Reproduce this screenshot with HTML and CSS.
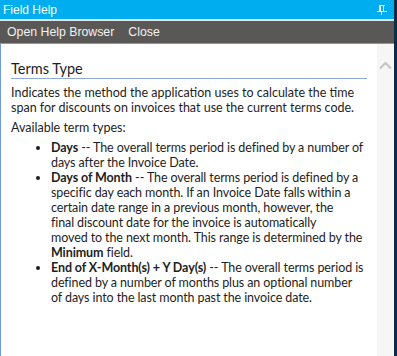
FILE: index.html
```html
<!DOCTYPE html>
<html>
<head>
  <title>Field Help</title>
  <link rel="stylesheet" href="styles.css">
</head>
<body>
<div class="window">
  <div class="titlebar">
    <span class="title">Field Help</span>
    <svg class="pin" width="10" height="10" viewBox="0 0 10 10">
      <path d="M2 0.5H8M2.5 0.5V6M6.5 0.5V6M0 6.5H10M4.5 6.5V10" stroke="#fff" stroke-width="1" fill="none"/>
      <rect x="2" y="0" width="2" height="6" fill="#fff"/>
    </svg>
  </div>
  <div class="toolbar">
    <span class="tool">Open Help Browser</span>
    <span class="tool">Close</span>
  </div>
  <div class="main">
    <div class="content">
      <h1 class="heading">Terms Type</h1>
      <p class="desc">Indicates the method the application uses to calculate the time<br>span for discounts on invoices that use the current terms code.</p>
      <p class="desc">Available term types:</p>
      <ul class="types">
        <li><b>Days</b> -- The overall terms period is defined by a number of<br>days after the Invoice Date.</li>
        <li><b>Days of Month</b> -- The overall terms period is defined by a<br>specific day each month. If an Invoice Date falls within a<br>certain date range in a previous month, however, the<br>final discount date for the invoice is automatically<br>moved to the next month. This range is determined by the<br><b>Minimum</b> field.</li>
        <li><b>End of X-Month(s) + Y Day(s)</b> -- The overall terms period is<br>defined by a number of months plus an optional number<br>of days into the last month past the invoice date.</li>
      </ul>
    </div>
    <div class="scrollbar">
      <svg class="arrow" width="13" height="9" viewBox="0 0 13 9">
        <path d="M1 7.5L6.5 2L12 7.5" stroke="#c4c4c4" stroke-width="2" fill="none"/>
      </svg>
    </div>
  </div>
</div>
</body>
</html>
```

FILE: styles.css
```css
body{
  margin:0;
  background:#fff;
}

.window{
  width:394px;
  height:356px;
  border-right:3px solid #0d2b42;
  display:flex;
  flex-direction:column;
  overflow:hidden;
}

.titlebar{
  height:19px;
  background-color:#00adef;
  border-bottom:2px solid #e4e4e4;
  display:flex;
  align-items:center;
  justify-content:space-between;
  padding:0 7px 0 3px;
}

.title{
  font:12px "Liberation Sans", Arial, sans-serif;
  color:#fff;
}

.pin{
  display:block;
}

.toolbar{
  height:22px;
  background-color:#595856;
  border-bottom:1px solid #6f9bd8;
  display:flex;
  align-items:center;
  gap:14px;
  padding-left:7px;
}

.tool{
  font:12.3px "Liberation Sans", Arial, sans-serif;
  color:#f2f2f2;
}

.main{
  flex:1;
  display:flex;
  border-left:1px solid #6f9bd8;
}

.content{
  flex:1;
  padding:17px 10px 0 10px;
  font-family:Lato, "Liberation Sans", sans-serif;
  font-size:12.5px;
  line-height:15px;
  color:#1e1e1e;
}

.heading{
  margin:0 0 6px 0;
  font-size:14.5px;
  font-weight:normal;
  line-height:16px;
  padding-bottom:1px;
  border-bottom:1px solid #8eaadb;
}

.desc{
  margin:0 0 5px 0;
}

.types{
  margin:0;
  padding-left:40px;
  white-space:nowrap;
  letter-spacing:-0.1px;
}

.scrollbar{
  width:17px;
  background-color:#f6f6f6;
  display:flex;
  flex-direction:column;
  align-items:center;
  padding-top:17px;
}
```
